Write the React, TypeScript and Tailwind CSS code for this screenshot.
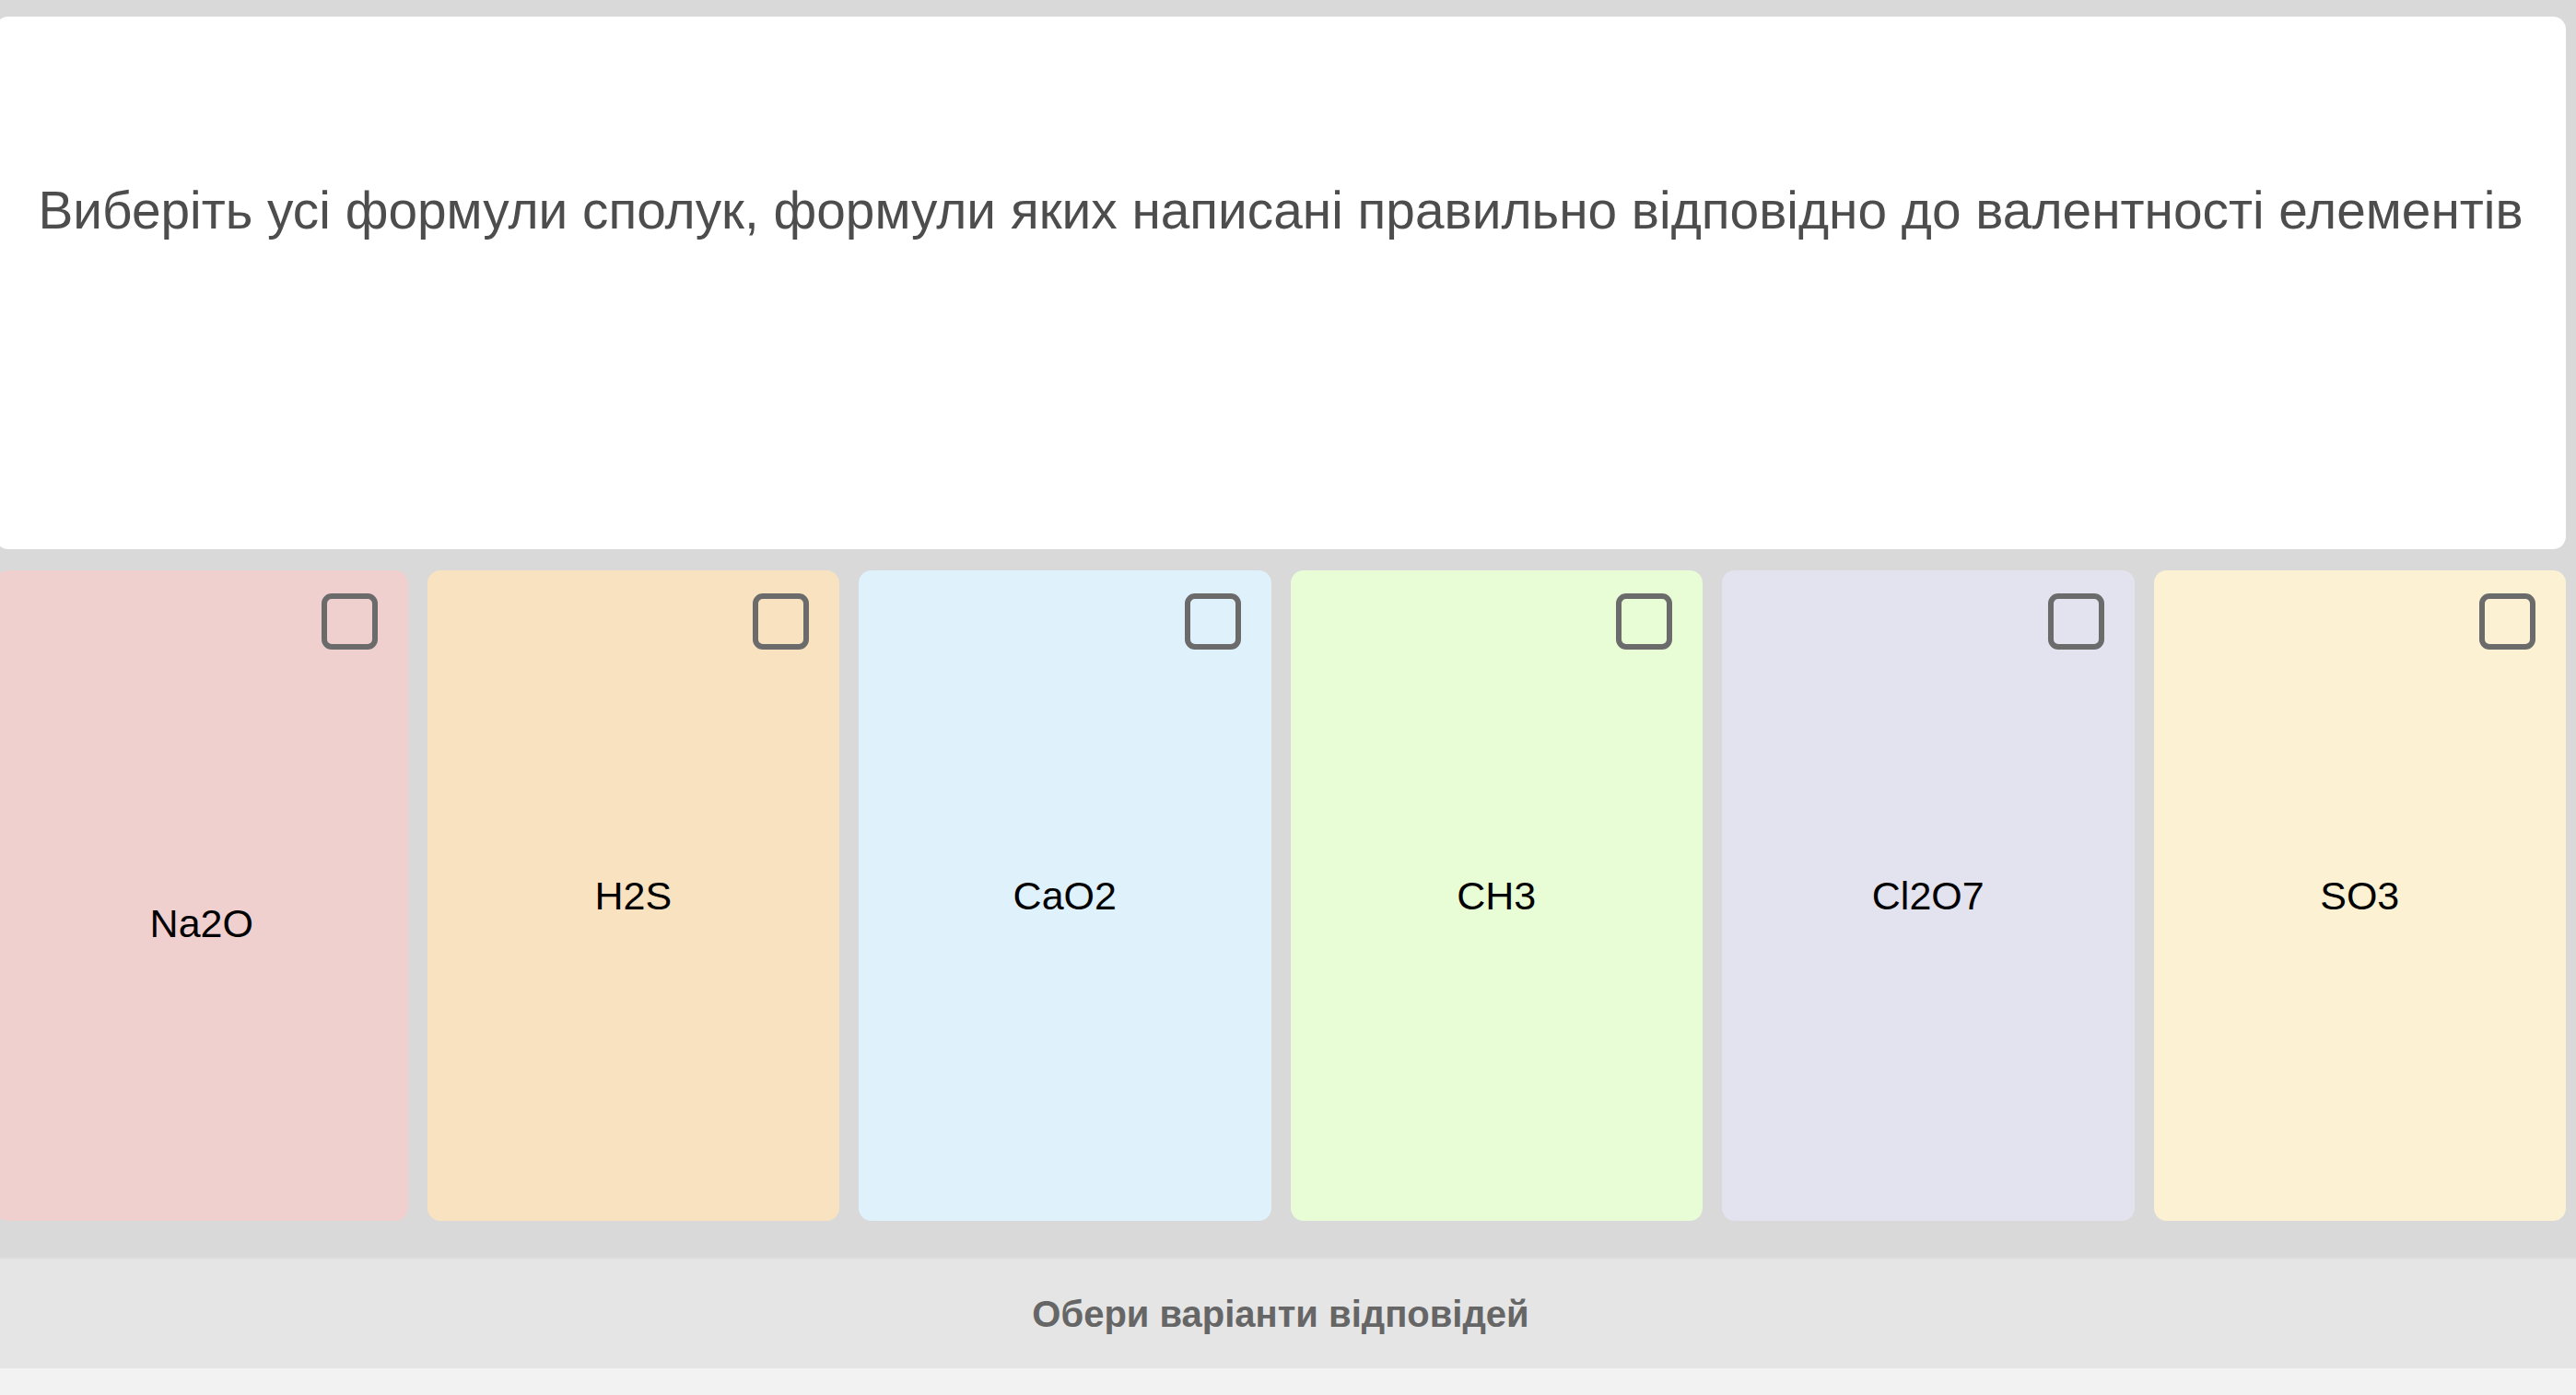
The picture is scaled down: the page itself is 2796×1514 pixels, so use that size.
const options = [
  { label: "Na2O", bg: "bg-[#f0cfcf]", offset: true },
  { label: "H2S", bg: "bg-[#f8e2c0]" },
  { label: "CaO2", bg: "bg-[#dff1fa]" },
  { label: "CH3", bg: "bg-[#e8fcd5]" },
  { label: "Cl2O7", bg: "bg-[#e3e3ef]" },
  { label: "SO3", bg: "bg-[#fcf2d3]" },
];

function OptionCard({ label, bg, offset }: { label: string; bg: string; offset?: boolean }) {
  return (
    <div className={`relative flex items-center justify-center rounded-[14px] ${bg}`}>
      <span className="absolute right-[33px] top-[25px] h-[61px] w-[61px] rounded-[11px] border-[6px] border-[#6b6b6b]" />
      <span className={`text-[43px] text-black ${offset ? "mt-[60px]" : ""}`}>{label}</span>
    </div>
  );
}

export default function App() {
  return (
    <div
      className="flex h-[1514px] w-full flex-col overflow-hidden bg-[#d9d9d9]"
      style={{ fontFamily: '"Liberation Sans", Arial, sans-serif' }}
    >
      <div className="ml-[-5px] w-[2790px] pt-[18px]">
        <div className="h-[578px] rounded-[14px] bg-white pt-[179px] text-center text-[56.8px] leading-[64px] text-[#4d4d4d]">
          Виберіть усі формули сполук, формули яких написані правильно відповідно до валентності елементів
        </div>
        <div className="mt-[23px] grid h-[706px] grid-cols-6 gap-[21px]">
          {options.map((o) => (
            <OptionCard key={o.label} {...o} />
          ))}
        </div>
      </div>
      <div className="mt-[40px] flex h-[120px] items-center justify-center border-t-2 border-[#e0e0e0] bg-[#e5e5e5] pr-[16px]">
        <span className="text-[40px] font-bold text-[#666666]">Обери варіанти відповідей</span>
      </div>
      <div className="flex-1 bg-[#f2f2f2]" />
    </div>
  );
}
